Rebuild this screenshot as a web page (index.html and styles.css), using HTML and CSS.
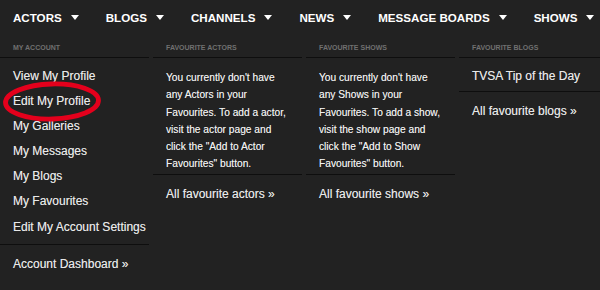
FILE: index.html
```html
<!DOCTYPE html>
<html lang="en">
<head>
<meta charset="utf-8">
<title>TVSA menu</title>
<link rel="stylesheet" href="styles.css">
</head>
<body>
<div class="page">
  <nav class="topnav">
    <a class="nav-item">Actors<span class="caret"></span></a>
    <a class="nav-item">Blogs<span class="caret"></span></a>
    <a class="nav-item">Channels<span class="caret"></span></a>
    <a class="nav-item">News<span class="caret"></span></a>
    <a class="nav-item">Message Boards<span class="caret"></span></a>
    <a class="nav-item">Shows<span class="caret"></span></a>
  </nav>
  <div class="menu">
    <section class="col">
      <h3 class="col-head">My Account</h3>
      <ul class="links">
        <li>View My Profile</li>
        <li>Edit My Profile</li>
        <li>My Galleries</li>
        <li>My Messages</li>
        <li>My Blogs</li>
        <li>My Favourites</li>
        <li>Edit My Account Settings</li>
      </ul>
      <div class="more">Account Dashboard &raquo;</div>
    </section>
    <section class="col">
      <h3 class="col-head">Favourite Actors</h3>
      <p class="note">You currently don't have any Actors in your Favourites. To add a actor, visit the actor page and click the "Add to Actor Favourites" button.</p>
      <div class="more">All favourite actors &raquo;</div>
    </section>
    <section class="col">
      <h3 class="col-head">Favourite Shows</h3>
      <p class="note">You currently don't have any Shows in your Favourites. To add a show, visit the show page and click the "Add to Show Favourites" button.</p>
      <div class="more">All favourite shows &raquo;</div>
    </section>
    <section class="col">
      <h3 class="col-head">Favourite Blogs</h3>
      <ul class="links single">
        <li>TVSA Tip of the Day</li>
      </ul>
      <div class="more">All favourite blogs &raquo;</div>
    </section>
  </div>
  <svg class="circle" width="100" height="42" viewBox="0 0 100 42" aria-hidden="true">
    <ellipse cx="50" cy="20.5" rx="46.5" ry="17.5" fill="none" stroke="#e4001c" stroke-width="4.8" transform="rotate(-1.5 50 20.5)"/>
  </svg>
</div>
</body>
</html>
```

FILE: styles.css
```css
* { box-sizing: border-box; }
html, body {
  margin: 0;
  padding: 0;
  background: #222222;
}
body {
  width: 600px;
  height: 290px;
  overflow: hidden;
  font-family: "Liberation Sans", Arial, sans-serif;
  color: #e8e8e8;
}
.page {
  position: relative;
  height: 290px;
}
.topnav {
  display: flex;
  align-items: center;
  height: 34px;
}
.nav-item {
  display: flex;
  align-items: center;
  padding: 0 14px 0 13px;
  font-size: 11.6px;
  font-weight: bold;
  text-transform: uppercase;
  color: #ffffff;
  white-space: nowrap;
}
.caret {
  display: inline-block;
  margin-left: 9px;
  width: 0;
  height: 0;
  border-left: 4px solid transparent;
  border-right: 4px solid transparent;
  border-top: 5px solid #ffffff;
}
.menu {
  display: grid;
  grid-template-columns: 149px 149px 149px 1fr;
  column-gap: 4px;
  align-items: start;
}
.col-head {
  margin: 0;
  height: 24px;
  padding: 10px 0 0 13px;
  font-size: 7px;
  line-height: 8px;
  font-weight: bold;
  text-transform: uppercase;
  color: #707070;
  border-bottom: 1px solid #0e0e0e;
}
.links {
  list-style: none;
  margin: 0;
  padding: 6px 0 4px 13px;
  border-bottom: 1px solid #0e0e0e;
}
.links li {
  font-size: 12px;
  line-height: 25.1px;
  white-space: nowrap;
  text-shadow: 0 0 0.4px rgba(255, 255, 255, 0.5);
}
.links.single {
  padding-bottom: 2px;
}
.note {
  margin: 0;
  padding: 11px 10px 1px 13px;
  font-size: 10.2px;
  line-height: 17.3px;
  color: #f0f0f0;
  text-shadow: 0 0 0.4px rgba(255, 255, 255, 0.5);
  border-bottom: 1px solid #0e0e0e;
}
.more {
  padding: 7px 0 0 13px;
  font-size: 12px;
  line-height: 25px;
  white-space: nowrap;
  text-shadow: 0 0 0.4px rgba(255, 255, 255, 0.5);
}
.circle {
  position: absolute;
  left: 2px;
  top: 80.5px;
}
```
